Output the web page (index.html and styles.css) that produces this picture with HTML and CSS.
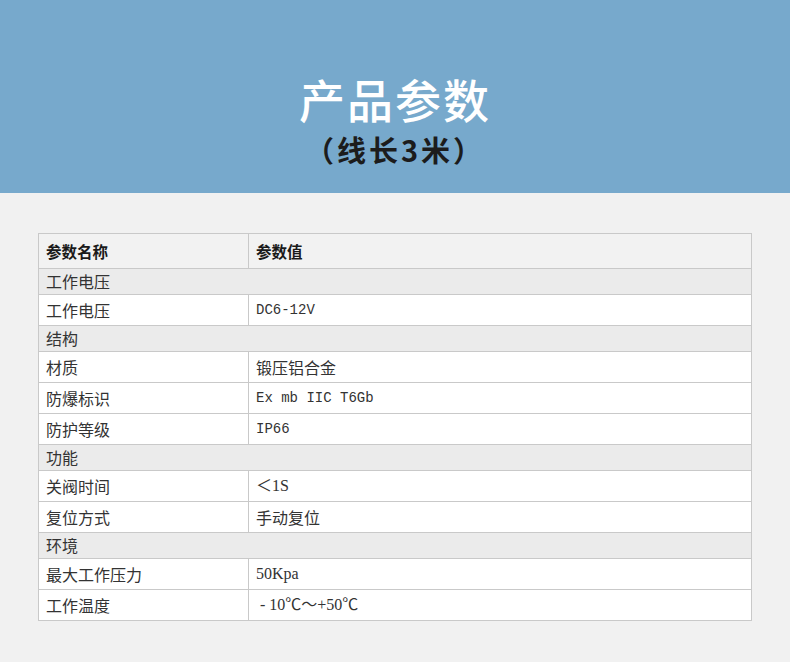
FILE: index.html
```html
<!DOCTYPE html>
<html lang="zh">
<head>
<meta charset="utf-8">
<title>产品参数</title>
<link rel="stylesheet" href="styles.css">
</head>
<body>
<header class="banner">
  <h1 class="title">产品参数</h1>
  <p class="subtitle">（线长3米）</p>
</header>
<main class="content">
  <table class="spec">
    <colgroup><col class="c1"><col class="c2"></colgroup>
    <tr class="head"><th>参数名称</th><th>参数值</th></tr>
    <tr class="sec"><td colspan="2">工作电压</td></tr>
    <tr class="row"><td>工作电压</td><td class="mono">DC6-12V</td></tr>
    <tr class="sec"><td colspan="2">结构</td></tr>
    <tr class="row"><td>材质</td><td>锻压铝合金</td></tr>
    <tr class="row"><td>防爆标识</td><td class="mono">Ex mb IIC T6Gb</td></tr>
    <tr class="row"><td>防护等级</td><td class="mono">IP66</td></tr>
    <tr class="sec"><td colspan="2">功能</td></tr>
    <tr class="row"><td>关阀时间</td><td class="serif">＜1S</td></tr>
    <tr class="row"><td>复位方式</td><td>手动复位</td></tr>
    <tr class="sec"><td colspan="2">环境</td></tr>
    <tr class="row"><td>最大工作压力</td><td class="serif">50Kpa</td></tr>
    <tr class="row"><td>工作温度</td><td class="serif">&nbsp;- 10℃～+50℃</td></tr>
  </table>
</main>
</body>
</html>
```
FILE: styles.css
```css
html, body {
  margin: 0;
  padding: 0;
  background: #f1f1f1;
}
body {
  width: 790px;
  height: 662px;
  overflow: hidden;
  font-family: "Noto Sans CJK SC", sans-serif;
}
.banner {
  background: #77a9cc;
  height: 193px;
  box-sizing: border-box;
  padding-top: 69px;
  text-align: center;
}
.title {
  margin: 0;
  font-size: 46px;
  font-weight: 500;
  line-height: 58px;
  color: #ffffff;
  letter-spacing: 2px;
}
.subtitle {
  margin: 4px 0 0;
  font-size: 29px;
  font-weight: 700;
  line-height: 36px;
  color: #1c1c1c;
  letter-spacing: 3px;
}
.content {
  padding: 40px 0 0 38px;
}
.spec {
  border-collapse: collapse;
  width: 714px;
  table-layout: fixed;
  font-size: 16px;
  color: #333;
}
.c1 { width: 210px; }
.spec th, .spec td {
  border: 1px solid #c9c9c9;
  padding: 0 7px 1px;
  text-align: left;
  vertical-align: middle;
  line-height: 20px;
}
.head { height: 35px; background: #f2f2f2; }
.head th { font-weight: 700; color: #1a1a1a; font-size: 15.5px; }
.sec { height: 26px; background: #ebebeb; }
.row { height: 31px; background: #ffffff; }
.mono { font-family: "Liberation Mono", "Noto Sans CJK SC", monospace; font-size: 14px; }
.serif { font-family: "Liberation Serif", "Noto Sans CJK SC", serif; font-size: 16px; }
```
